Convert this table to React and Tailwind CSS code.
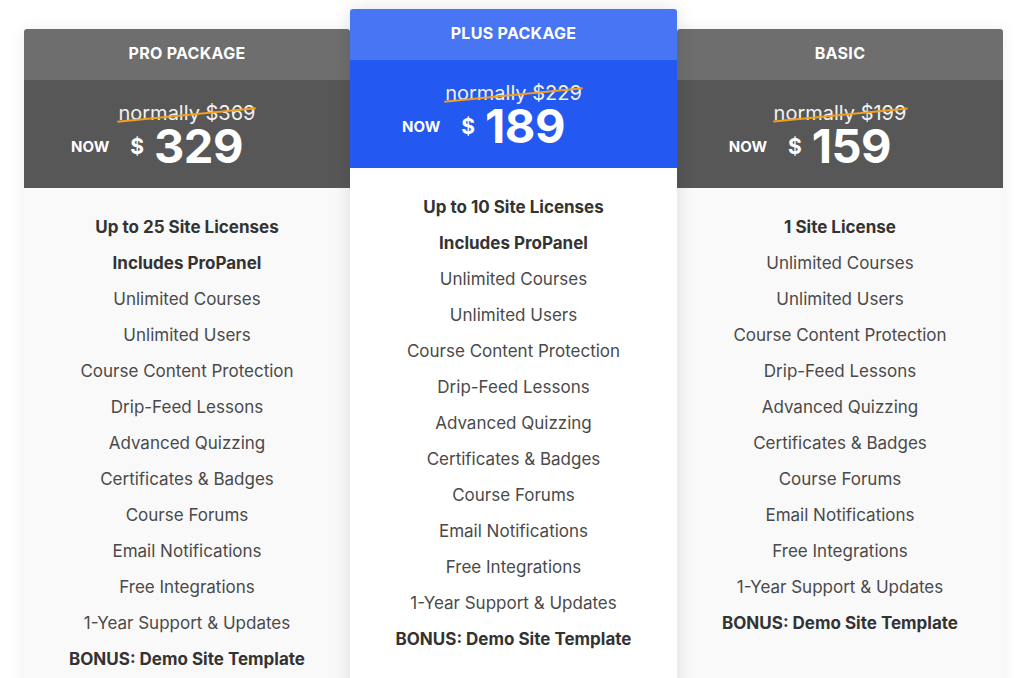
const plans = [
  {
    name: "PRO PACKAGE",
    was: "369",
    now: "329",
    featured: false,
    features: [
      { text: "Up to 25 Site Licenses", bold: true },
      { text: "Includes ProPanel", bold: true },
      { text: "Unlimited Courses" },
      { text: "Unlimited Users" },
      { text: "Course Content Protection" },
      { text: "Drip-Feed Lessons" },
      { text: "Advanced Quizzing" },
      { text: "Certificates & Badges" },
      { text: "Course Forums" },
      { text: "Email Notifications" },
      { text: "Free Integrations" },
      { text: "1-Year Support & Updates" },
      { text: "BONUS: Demo Site Template", bold: true },
    ],
  },
  {
    name: "PLUS PACKAGE",
    was: "229",
    now: "189",
    featured: true,
    features: [
      { text: "Up to 10 Site Licenses", bold: true },
      { text: "Includes ProPanel", bold: true },
      { text: "Unlimited Courses" },
      { text: "Unlimited Users" },
      { text: "Course Content Protection" },
      { text: "Drip-Feed Lessons" },
      { text: "Advanced Quizzing" },
      { text: "Certificates & Badges" },
      { text: "Course Forums" },
      { text: "Email Notifications" },
      { text: "Free Integrations" },
      { text: "1-Year Support & Updates" },
      { text: "BONUS: Demo Site Template", bold: true },
    ],
  },
  {
    name: "BASIC",
    was: "199",
    now: "159",
    featured: false,
    features: [
      { text: "1 Site License", bold: true },
      { text: "Unlimited Courses" },
      { text: "Unlimited Users" },
      { text: "Course Content Protection" },
      { text: "Drip-Feed Lessons" },
      { text: "Advanced Quizzing" },
      { text: "Certificates & Badges" },
      { text: "Course Forums" },
      { text: "Email Notifications" },
      { text: "Free Integrations" },
      { text: "1-Year Support & Updates" },
      { text: "BONUS: Demo Site Template", bold: true },
    ],
  },
];

const PlanCard = ({ plan }) => {
  const { featured } = plan;

  return (
    <div
      className={`flex flex-col rounded-t-[3px] overflow-hidden ${
        featured
          ? "w-[327px] z-10 h-[700px] bg-white shadow-[0_0_18px_rgba(0,0,0,0.12)]"
          : "w-[326px] mt-[20px] h-[680px] bg-[#f9f9f9] shadow-[0_0_16px_rgba(0,0,0,0.07)]"
      }`}
    >
      {/* Header */}
      <div
        className={`h-[51px] flex items-center justify-center pb-[4px] text-white font-bold text-[16px] tracking-[0.3px] ${
          featured ? "bg-[#4775f4]" : "bg-[#6e6e6e]"
        }`}
      >
        {plan.name}
      </div>

      {/* Price */}
      <div
        className={`h-[108px] flex flex-col items-center pt-[23px] ${
          featured ? "bg-[#2359f1]" : "bg-[#575757]"
        }`}
      >
        <div className="relative text-[20px] leading-[20px] text-[#f2f2f2]">
          normally ${plan.was}
          <div className="absolute left-[-1px] right-[-1px] top-[11px] h-[1.5px] bg-[#f0a020] -rotate-[5.5deg]" />
        </div>
        <div className="mt-[4px] h-[38px] flex items-center mr-[60px] text-white font-bold">
          <div className="text-[15px] leading-[16px] mt-[2px]">NOW</div>
          <div className="text-[21px] leading-[22px] ml-[21px] mt-[1px]">$</div>
          <div className="text-[47px] leading-[38px] ml-[10px] tracking-[-0.5px]">
            {plan.now}
          </div>
        </div>
      </div>

      {/* Features */}
      <div className="flex flex-col items-center pt-[21px]">
        {plan.features.map((f) => (
          <p
            key={f.text}
            className={`leading-[36px] text-[17px] ${
              f.bold ? "font-bold text-[#333]" : "text-[#4a4a4a]"
            }`}
          >
            {f.text}
          </p>
        ))}
      </div>
    </div>
  );
};

const App = () => {
  return (
    <div
      className="w-[1024px] h-[678px] overflow-hidden bg-white pt-[9px] pl-[24px] flex items-start"
      style={{ fontFamily: "Inter, 'Open Sans', sans-serif" }}
    >
      {plans.map((plan) => (
        <PlanCard key={plan.name} plan={plan} />
      ))}
    </div>
  );
};

export default App;
